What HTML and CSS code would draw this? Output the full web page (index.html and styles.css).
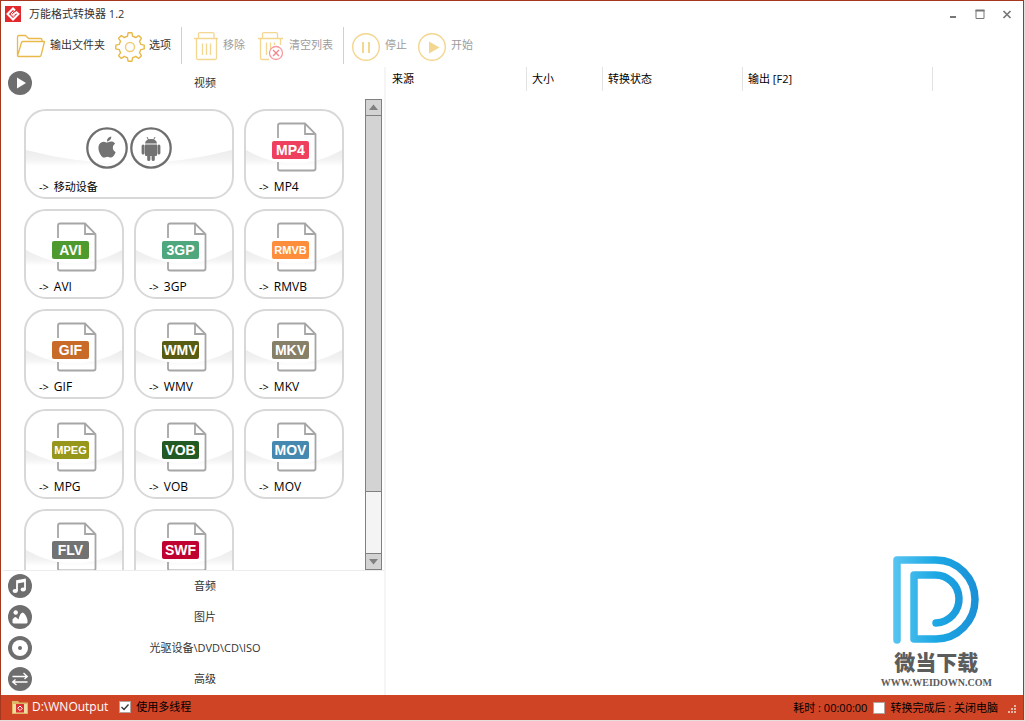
FILE: index.html
```html
<!DOCTYPE html>
<html lang="zh-CN">
<head>
<meta charset="utf-8">
<title>万能格式转换器 1.2</title>
<link rel="stylesheet" href="styles.css">
</head>
<body>
<svg class="defs" width="0" height="0" aria-hidden="true">
  <symbol id="page" viewBox="0 0 40 50">
    <path d="M1 16V3.500Q1 1.500 3 1.500H28L38.500 12V46.500Q38.500 48.500 36.500 48.500H3Q1 48.500 1 46.500V40M28 1.500V12H38.500" fill="none" stroke="#a6a6a6" stroke-width="1.800"/>
  </symbol>
</svg>
<div class="window">
  <header class="titlebar">
    <svg class="app-icon" viewBox="0 0 16 16" aria-hidden="true">
      <rect width="16" height="16" fill="#e0282d"/>
      <path d="M10 4.500L8 2.500L2.500 8L8 13.500L13.500 8L11.500 6.200L7.500 9" fill="none" stroke="#fff" stroke-width="2"/>
      <path d="M8.500 5.500L6 8L8 10.500L9.800 8.800" fill="none" stroke="#fff" stroke-width="1"/>
    </svg>
    <h1 class="title">万能格式转换器 1.2</h1>
    <div class="window-controls">
      <button type="button" aria-label="最小化"><svg viewBox="0 0 10 10"><path d="M2 8H8" stroke="#777" stroke-width="2"/></svg></button>
      <button type="button" aria-label="最大化"><svg viewBox="0 0 10 10"><path d="M1 1V9.500H9V1" fill="none" stroke="#777"/><path d="M.5 1.500H9.500" stroke="#777" stroke-width="2"/></svg></button>
      <button type="button" aria-label="关闭"><svg viewBox="0 0 10 10"><path d="M1.500 2L8.500 9M8.500 2L1.500 9" stroke="#777" stroke-width="1.700"/></svg></button>
    </div>
  </header>

  <nav class="toolbar">
    <button type="button" class="tool">
      <svg viewBox="0 0 30 30"><path d="M1.500 24V5Q1.500 3.500 3 3.500H9.500L12.500 6.500H24.500Q26 6.500 26 8V9.500M1.500 24L5.500 10.500Q6 9.500 7 9.500H28.500L25 23.500Q24.700 24.500 23.500 24.500H2.500Q1.500 24.500 1.500 23.500" fill="none" stroke="#e9b949" stroke-width="1.300" stroke-linejoin="round"/></svg>
      <span>输出文件夹</span>
    </button>
    <button type="button" class="tool">
      <svg viewBox="-15 -15 30 30"><path d="M10.700-2.600L14.200-1.900V1.900L10.700 2.600Q10.300 4.300 9.400 5.700L11.400 8.700L8.700 11.400L5.700 9.400Q4.300 10.300 2.600 10.700L1.900 14.200H-1.900L-2.600 10.700Q-4.300 10.300-5.700 9.400L-8.700 11.400L-11.400 8.700L-9.400 5.700Q-10.300 4.300-10.700 2.600L-14.200 1.900V-1.900L-10.700-2.600Q-10.300-4.300-9.400-5.700L-11.400-8.700L-8.700-11.400L-5.700-9.400Q-4.300-10.300-2.600-10.700L-1.900-14.200H1.900L2.600-10.700Q4.300-10.300 5.700-9.400L8.700-11.400L11.400-8.700L9.400-5.700Q10.300-4.300 10.700-2.600Z" fill="none" stroke="#e9b949" stroke-width="1.400" stroke-linejoin="round"/><circle r="4.500" fill="none" stroke="#f0cc77" stroke-width="1.400"/></svg>
      <span>选项</span>
    </button>
    <span class="separator"></span>
    <button type="button" class="tool" disabled>
      <svg viewBox="0 0 30 30"><path d="M5 6.500H29M9.500 6V2Q9.500.7 11 .7H23.500Q25 .7 25 2V6M7.500 6.500V26Q7.500 27.500 9 27.500H26Q27.500 27.500 27.500 26V6.500M13.500 11.500V23M17.500 11.500V23M21.500 11.500V23" fill="none" stroke="#f3d68f" stroke-width="1.300"/></svg>
      <span>移除</span>
    </button>
    <button type="button" class="tool" disabled>
      <svg viewBox="0 0 30 30"><path d="M3 6.500H28M7.500 6V2Q7.500.7 9 .7H21Q22.500.7 22.500 2V6M5.500 6.500V26Q5.500 27.500 7 27.500H14M25.500 6.500V13M11.500 10.500V23M15.500 10.500V17M19.500 10.500V13" fill="none" stroke="#f3d68f" stroke-width="1.300"/><circle cx="21" cy="21" r="6.500" fill="#fff" stroke="#f69a9f" stroke-width="1.300"/><path d="M18 18L24 24M24 18L18 24" stroke="#f3858b" stroke-width="1.300"/></svg>
      <span>清空列表</span>
    </button>
    <span class="separator"></span>
    <button type="button" class="tool" disabled>
      <svg viewBox="0 0 30 30"><circle cx="15" cy="15" r="13.300" fill="none" stroke="#f3d68f" stroke-width="1.400"/><path d="M12 10V21M18 10V21" stroke="#f3d68f" stroke-width="2"/></svg>
      <span>停止</span>
    </button>
    <button type="button" class="tool" disabled>
      <svg viewBox="0 0 30 30"><circle cx="15" cy="15" r="13.300" fill="none" stroke="#f3d68f" stroke-width="1.400"/><path d="M12 9.500L22.500 15.500L12 21.500Z" fill="#f3d68f"/></svg>
      <span>开始</span>
    </button>
  </nav>

  <main class="panes">
    <aside class="formats">
      <button type="button" class="section" aria-expanded="true">
        <svg viewBox="0 0 24 24"><circle cx="12" cy="12" r="12" fill="#6e6e6e"/><path d="M9 6.500L18 12L9 17.500Z" fill="#fff"/></svg>
        <span>视频</span>
      </button>
      <div class="gallery">
        <div class="tiles">
          <button type="button" class="tile wide">
            <svg class="devices" viewBox="0 0 86 42" aria-hidden="true">
              <g fill="none" stroke="#6e6e6e" stroke-width="2.300"><circle cx="21" cy="21" r="19.700"/><circle cx="65" cy="21" r="19.700"/></g>
              <path transform="translate(10.500 9.500) scale(.88)" fill="#737373" d="M12.152 6.896c-.948 0-2.415-1.078-3.960-1.040-2.040.027-3.910 1.183-4.961 3.014-2.117 3.675-.546 9.103 1.519 12.090 1.013 1.454 2.208 3.090 3.792 3.039 1.520-.065 2.090-.987 3.935-.987 1.831 0 2.350.987 3.960.948 1.637-.026 2.676-1.480 3.676-2.948 1.156-1.688 1.636-3.325 1.662-3.415-.039-.013-3.182-1.221-3.220-4.857-.026-3.040 2.480-4.494 2.597-4.559-1.429-2.090-3.623-2.324-4.390-2.376-2-.156-3.675 1.090-4.610 1.090zM15.530 3.830c.843-1.012 1.400-2.427 1.245-3.830-1.207.052-2.662.805-3.532 1.818-.780.896-1.454 2.338-1.273 3.714 1.338.104 2.715-.688 3.559-1.701"/>
              <g fill="#737373"><path d="M59 16.500Q59.500 12 65 12T71 16.500ZM59 17.500H71V28Q71 29 70 29H68.800V32.500A1.600 1.600 0 0 1 65.600 32.500V29H64.400V32.500A1.600 1.600 0 0 1 61.200 32.500V29H60Q59 29 59 28Z"/><rect x="55.600" y="17.500" width="3" height="10" rx="1.500"/><rect x="71.400" y="17.500" width="3" height="10" rx="1.500"/><path d="M61 10L62.500 13M69 10L67.500 13" stroke="#737373"/></g>
            </svg>
            <span class="caption"><i class="arrow">-&gt;</i>移动设备</span>
          </button>
          <button type="button" class="tile"><span class="file"><svg><use href="#page"/></svg><b class="badge mp4">MP4</b></span><span class="caption"><i class="arrow">-&gt;</i>MP4</span></button>
          <button type="button" class="tile"><span class="file"><svg><use href="#page"/></svg><b class="badge avi">AVI</b></span><span class="caption"><i class="arrow">-&gt;</i>AVI</span></button>
          <button type="button" class="tile"><span class="file"><svg><use href="#page"/></svg><b class="badge tgp">3GP</b></span><span class="caption"><i class="arrow">-&gt;</i>3GP</span></button>
          <button type="button" class="tile"><span class="file"><svg><use href="#page"/></svg><b class="badge long rmvb">RMVB</b></span><span class="caption"><i class="arrow">-&gt;</i>RMVB</span></button>
          <button type="button" class="tile"><span class="file"><svg><use href="#page"/></svg><b class="badge gif">GIF</b></span><span class="caption"><i class="arrow">-&gt;</i>GIF</span></button>
          <button type="button" class="tile"><span class="file"><svg><use href="#page"/></svg><b class="badge wmv">WMV</b></span><span class="caption"><i class="arrow">-&gt;</i>WMV</span></button>
          <button type="button" class="tile"><span class="file"><svg><use href="#page"/></svg><b class="badge mkv">MKV</b></span><span class="caption"><i class="arrow">-&gt;</i>MKV</span></button>
          <button type="button" class="tile"><span class="file"><svg><use href="#page"/></svg><b class="badge long mpeg">MPEG</b></span><span class="caption"><i class="arrow">-&gt;</i>MPG</span></button>
          <button type="button" class="tile"><span class="file"><svg><use href="#page"/></svg><b class="badge vob">VOB</b></span><span class="caption"><i class="arrow">-&gt;</i>VOB</span></button>
          <button type="button" class="tile"><span class="file"><svg><use href="#page"/></svg><b class="badge mov">MOV</b></span><span class="caption"><i class="arrow">-&gt;</i>MOV</span></button>
          <button type="button" class="tile"><span class="file"><svg><use href="#page"/></svg><b class="badge flv">FLV</b></span></button>
          <button type="button" class="tile"><span class="file"><svg><use href="#page"/></svg><b class="badge swf">SWF</b></span></button>
        </div>
        <div class="scrollbar">
          <button type="button" aria-label="向上"><svg viewBox="0 0 15 15"><path d="M3 10H12L7.500 4.500Z" fill="#808080"/></svg></button>
          <div class="track"><div class="thumb"></div></div>
          <button type="button" aria-label="向下"><svg viewBox="0 0 15 15"><path d="M3 5H12L7.500 10.500Z" fill="#808080"/></svg></button>
        </div>
      </div>
      <button type="button" class="section">
        <svg viewBox="0 0 24 24"><circle cx="12" cy="12" r="12" fill="#6e6e6e"/><path d="M9 17V7L17 5.500V15.500M9 8.500L17 7" fill="none" stroke="#fff" stroke-width="1.800"/><ellipse cx="7.200" cy="17" rx="2.600" ry="2.100" fill="#fff"/><ellipse cx="15.200" cy="15.500" rx="2.600" ry="2.100" fill="#fff"/></svg>
        <span>音频</span>
      </button>
      <button type="button" class="section">
        <svg viewBox="0 0 24 24"><circle cx="12" cy="12" r="12" fill="#6e6e6e"/><circle cx="7.700" cy="7.500" r="2.200" fill="#fff"/><path d="M4.500 17.500V14.500Q7 10 9.500 13.500L10.500 14.500Q12 8 14.500 7.500Q17.500 8 19.500 15V17.500Q19.500 18.500 18 18.500H6Q4.500 18.500 4.500 17.500Z" fill="#fff"/></svg>
        <span>图片</span>
      </button>
      <button type="button" class="section">
        <svg viewBox="0 0 24 24"><circle cx="12" cy="12" r="12" fill="#6e6e6e"/><circle cx="12" cy="12" r="8" fill="#fff"/><circle cx="12" cy="12" r="2" fill="#6e6e6e"/></svg>
        <span>光驱设备\DVD\CD\ISO</span>
      </button>
      <button type="button" class="section">
        <svg viewBox="0 0 24 24"><circle cx="12" cy="12" r="12" fill="#6e6e6e"/><path d="M4.500 9.500H19M15.500 6L19.300 9.500L16.500 12M19.500 15H5M7.500 12.500L4.700 15L8.500 18" fill="none" stroke="#fff" stroke-width="1.300"/></svg>
        <span>高级</span>
      </button>
    </aside>

    <section class="queue">
      <table class="columns">
        <thead><tr><th class="source">来源</th><th class="size">大小</th><th class="state">转换状态</th><th class="output">输出 [F2]</th><th></th></tr></thead>
      </table>
      <div class="brand">
        <svg viewBox="0 0 86 88" aria-hidden="true">
          <defs><linearGradient id="brand-blue" gradientUnits="userSpaceOnUse" x1="0" y1="0" x2="86" y2="0"><stop offset="0" stop-color="#58c5f1"/><stop offset=".5" stop-color="#1ca8e4"/><stop offset="1" stop-color="#1b8fd6"/></linearGradient></defs>
          <path d="M4 84V4H43A39 39.500 0 0 1 43 83H21V19H41A24 24 0 0 1 43 67" fill="none" stroke="url(#brand-blue)" stroke-width="7.500" stroke-linecap="round" stroke-linejoin="round"/>
        </svg>
        <strong class="brand-name">微当下载</strong>
        <span class="brand-site">WWW.WEIDOWN.COM</span>
      </div>
    </section>
  </main>

  <footer class="statusbar">
    <svg class="folder" viewBox="0 0 16 14" aria-hidden="true"><path d="M0 1H6L7.500 2.500H16V14H0Z" fill="#dcb866"/><path d="M1 4H15V13H1Z" fill="#f0dba2"/><rect x="4" y="4" width="8" height="8.500" fill="#db2f32"/><path d="M8 6L10.300 8.300L8 10.600L5.700 8.300Z" fill="none" stroke="#fff"/></svg>
    <a class="path" href="#output">D:\WNOutput</a>
    <label class="option"><input type="checkbox" checked>使用多线程</label>
    <div class="status-right">
      <span>耗时 : 00:00:00</span>
      <label class="option"><input type="checkbox">转换完成后 : 关闭电脑</label>
    </div>
    <svg class="grip" viewBox="0 0 8 8" aria-hidden="true"><path d="M6 0h2v2h-2zM3 3h2v2h-2zM6 3h2v2h-2zM0 6h2v2h-2zM3 6h2v2h-2zM6 6h2v2h-2z" fill="#e5b5aa"/></svg>
  </footer>
</div>
</body>
</html>
```
FILE: styles.css
```css
* { box-sizing: border-box; }

body {
  margin: 0;
  background: #e4dedd;
  color: #000;
  font: 11px/16px "Open Sans", "Noto Sans CJK SC", sans-serif;
}

button {
  margin: 0;
  padding: 0;
  border: 0;
  background: none;
  color: inherit;
  font: inherit;
}

svg { display: block; flex: none; }

.defs { position: absolute; }

.window {
  display: flex;
  flex-direction: column;
  height: calc(100vh - 1px);
  margin-right: 1px;
  border: 1px solid #a5371f;
  border-bottom: 0;
  background: #fff;
}

.titlebar {
  display: flex;
  align-items: center;
  height: 26px;
  padding: 0 11px 0 4px;
}

.app-icon { width: 16px; height: 16px; }

.title {
  margin: 0 auto 0 8px;
  color: #333;
  font-size: 11px;
  font-weight: 400;
}

.window-controls { display: flex; gap: 17px; }
.window-controls svg { width: 10px; height: 10px; }

.toolbar {
  display: flex;
  height: 37px;
  padding-left: 15px;
  color: #333;
}

.tool {
  display: flex;
  align-items: center;
  gap: 4px;
  margin-right: 10px;
}
.tool:disabled { color: #9c9c9c; }
.tool svg { width: 30px; height: 30px; margin-top: 3px; }
.tool span { padding-bottom: 2px; }

.separator { width: 1px; margin-right: 7px; background: #d0d0d0; }

.panes {
  display: flex;
  flex: 1;
  min-height: 0;
  padding-top: 3px;
}

.formats {
  display: flex;
  flex-direction: column;
  width: 385px;
  border-right: 2px solid #f5f5f5;
}

.section {
  display: flex;
  align-items: center;
  flex: none;
  height: 31px;
  padding: 0 0 2px 7px;
  color: #333;
}
.section:first-child { height: 32px; padding-bottom: 0; }
.section svg { width: 24px; height: 24px; }
.section span { flex: 1; padding-right: 6px; }

.gallery {
  display: flex;
  flex: 1;
  justify-content: space-between;
  min-height: 0;
  margin-left: 2px;
  padding: 0 2px 0 21px;
  border-bottom: 1px solid #ececec;
}

.tiles {
  display: grid;
  grid-template-columns: repeat(3, 100px);
  grid-auto-rows: 90px;
  gap: 10px;
  padding-top: 10px;
  overflow: hidden;
}

.tile {
  display: flex;
  flex-direction: column;
  align-items: flex-start;
  justify-content: space-between;
  padding: 11px 13px 2px;
  border: 2px solid #d8d8d8;
  border-radius: 22px;
  background: url("data:image/svg+xml,%3Csvg xmlns='http://www.w3.org/2000/svg' viewBox='0 0 96 86' preserveAspectRatio='none'%3E%3Cdefs%3E%3ClinearGradient id='g' x2='0' y2='1'%3E%3Cstop stop-color='%23ececec'/%3E%3Cstop offset='.6' stop-color='%23f3f3f3'/%3E%3Cstop offset='1' stop-color='white'/%3E%3C/linearGradient%3E%3C/defs%3E%3Cpath d='M0 39Q48 66 96 39V55H0Z' fill='url(%23g)'/%3E%3C/svg%3E") center / 100% 100% no-repeat;
}
.wide { grid-column: span 2; }

.caption { font-size: 12px; }
.wide .caption { font-size: 11px; }
.arrow { margin-right: 5px; font-size: 11px; font-style: normal; }

.devices { align-self: center; width: 86px; height: 42px; margin-top: 5px; }

.file {
  display: grid;
  grid-template-columns: 6px 35px;
  grid-template-rows: 50px;
  align-items: center;
  margin-left: 13px;
}
.file svg { grid-area: 1 / 1 / 2 / 3; width: 40px; height: 50px; margin-left: 5px; }

.badge {
  grid-area: 1 / 1 / 2 / 3;
  width: 37px;
  height: 18px;
  margin-top: 5px;
  border-radius: 2px;
  color: #fff;
  font: bold 14px/18px "Liberation Sans", sans-serif;
  text-align: center;
  white-space: nowrap;
}
.long { font-size: 11px; }
.mp4 { background: #ee3f5e; }
.avi { background: #4f9a2e; }
.tgp { background: #4fa87d; }
.rmvb { background: #ff8e3c; }
.gif { background: #c86a28; }
.wmv { background: #585b12; }
.mkv { background: #878069; }
.mpeg { background: #97971c; }
.vob { background: #235a24; }
.mov { background: #4689b0; }
.flv { background: #727272; }
.swf { background: #c00030; }

.scrollbar {
  display: flex;
  flex-direction: column;
  width: 17px;
  border: 1px solid #808080;
}
.scrollbar button { height: 15px; background: #d3d3d3; }
.scrollbar svg { width: 15px; height: 15px; }

.track {
  flex: 1;
  border: 1px solid #808080;
  border-width: 1px 0;
  background: #f4f4f4;
}
.thumb { height: 86%; border-bottom: 1px solid #808080; background: #d3d3d3; }

.queue {
  display: flex;
  flex: 1;
  flex-direction: column;
  justify-content: space-between;
}

.columns { width: 100%; table-layout: fixed; border-collapse: separate; border-spacing: 0; }
.columns th {
  height: 24px;
  padding: 0 0 0 5px;
  border-right: 1px solid #e2e2e2;
  font-weight: 400;
  text-align: left;
}
.columns th:last-child { border: 0; }
.columns .source { width: 141px; padding-left: 6px; }
.size { width: 76px; }
.state { width: 140px; }
.output { width: 190px; }

.brand {
  display: flex;
  flex-direction: column;
  align-items: center;
  align-self: flex-end;
  padding: 0 31px 4px 0;
  color: #5c5c5c;
}
.brand svg { width: 86px; height: 88px; }
.brand-name { margin-top: 3px; font: 900 21px/28px "Noto Sans CJK SC", sans-serif; }
.brand-site { font: bold 10px/16px "Liberation Serif", serif; }

.statusbar {
  display: flex;
  align-items: center;
  flex: none;
  height: 25px;
  padding: 0 7px 1px 11px;
  background: #cf4425;
}
.folder { width: 16px; height: 14px; }
.path { margin: 0 11px 0 4px; color: #fff; font-size: 12px; text-decoration: none; }

.option { display: flex; align-items: center; gap: 5px; }
.option input {
  appearance: none;
  width: 12px;
  height: 12px;
  margin: 0;
  border: 1px solid #b5a09b;
  background: #fff;
}
.option input:checked {
  background: #fff url("data:image/svg+xml,%3Csvg xmlns='http://www.w3.org/2000/svg' viewBox='0 0 10 10'%3E%3Cpath d='M1.500 5L4 7.500L8.500 2.500' fill='none' stroke='%23333' stroke-width='1.300'/%3E%3C/svg%3E");
}

.status-right {
  display: flex;
  gap: 6px;
  margin-left: auto;
  padding-top: 2px;
}
.grip { width: 8px; height: 8px; margin: 4px 0 0 10px; }
```
